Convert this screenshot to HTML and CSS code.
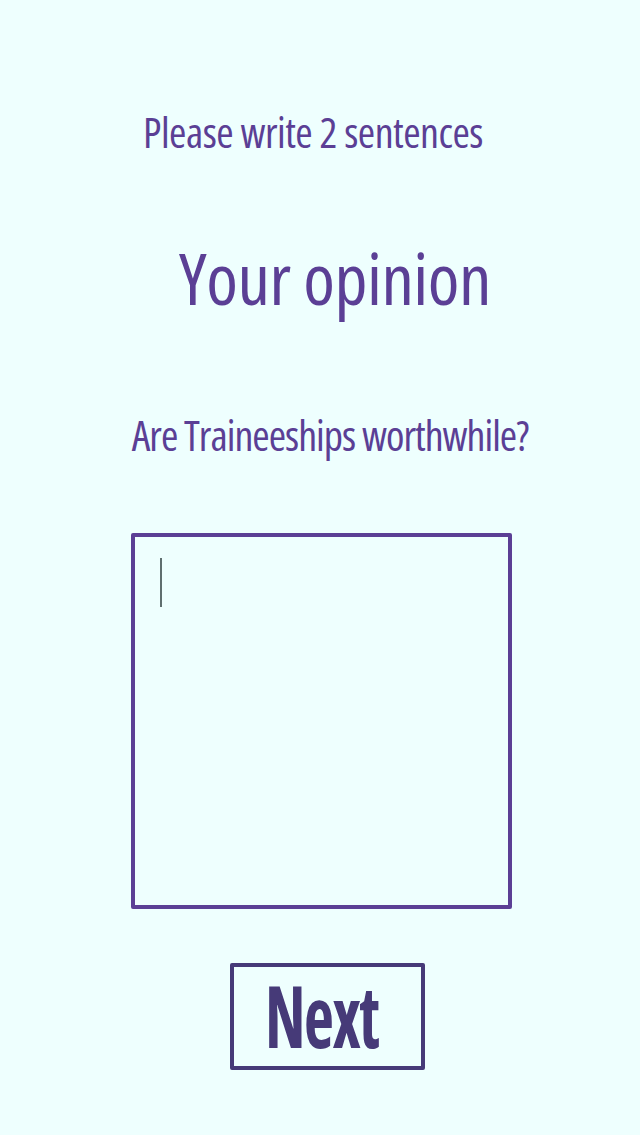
FILE: index.html
```html
<!DOCTYPE html>
<html lang="en">
<head>
<meta charset="utf-8">
<title>Your opinion</title>
<link rel="stylesheet" href="styles.css">
</head>
<body>
<main class="page">
  <p class="hint">Please write 2 sentences</p>
  <h1 class="title">Your opinion</h1>
  <p class="question">Are Traineeships worthwhile?</p>
  <div class="answer-box"><span class="caret"></span></div>
  <button class="next-btn" type="button"><span class="next-label">Next</span></button>
</main>
</body>
</html>
```
FILE: styles.css
```css
html, body {
  margin: 0;
  padding: 0;
  background: #eefffe;
}
body {
  font-family: "Open Sans", "Liberation Sans", sans-serif;
  font-stretch: 75%;
  color: #5b3f95;
}
.page {
  display: flex;
  flex-direction: column;
  align-items: center;
  padding-top: 111px;
}
.hint {
  margin: 0 14px 0 0;
  font-size: 42px;
  line-height: 42px;
  letter-spacing: -0.5px;
  white-space: nowrap;
}
.title {
  margin: 88px 0 0 30px;
  font-size: 72px;
  line-height: 72px;
  font-weight: 400;
  letter-spacing: -0.5px;
  white-space: nowrap;
}
.question {
  margin: 101px 0 0 20px;
  font-size: 42px;
  line-height: 42px;
  letter-spacing: -1px;
  white-space: nowrap;
}
.answer-box {
  box-sizing: border-box;
  width: 381px;
  height: 376px;
  margin: 77px 0 0 2px;
  border: 4px solid #5b3f95;
  border-radius: 2px;
  padding: 21px 25px;
}
.caret {
  display: block;
  width: 2px;
  height: 49px;
  background: #5f6f6f;
}
.next-btn {
  box-sizing: border-box;
  width: 195px;
  height: 107px;
  margin: 54px 0 0 14px;
  border: 4px solid #463a78;
  border-radius: 2px;
  background: transparent;
  color: #463a78;
  font-family: "Open Sans", "Liberation Sans", sans-serif;
  font-stretch: 75%;
  font-weight: 700;
  font-size: 86px;
  line-height: 86px;
  padding: 0;
  display: flex;
  align-items: center;
  justify-content: center;
}
.next-label {
  display: inline-block;
  letter-spacing: -2px;
  transform: scaleX(0.76);
  margin: -4px 11px 0 0;
}
```
